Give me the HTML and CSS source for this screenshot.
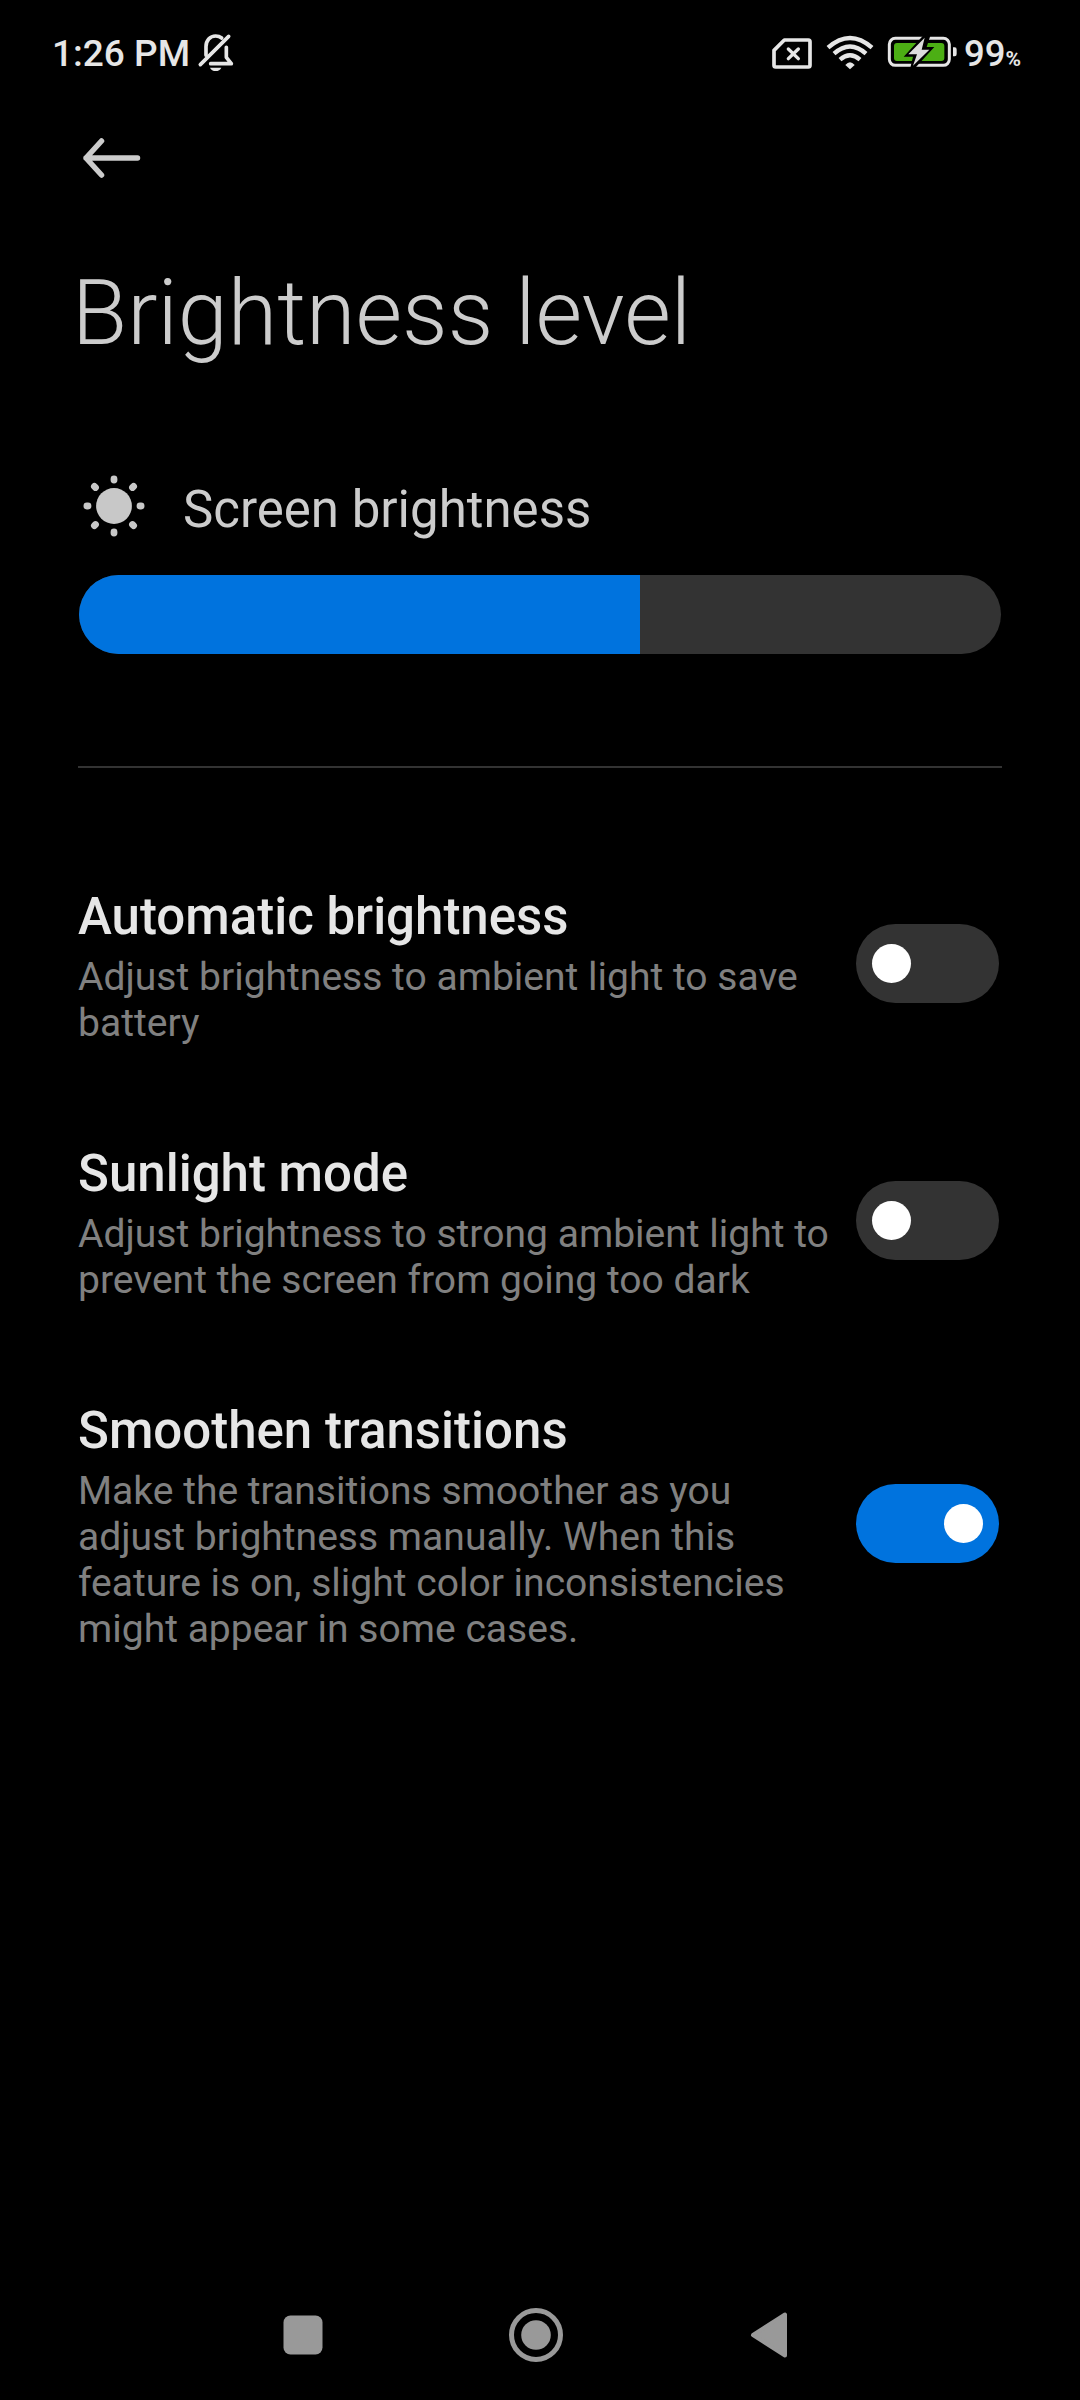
FILE: index.html
```html
<!DOCTYPE html>
<html lang="en">
<head>
<meta charset="utf-8">
<title>Brightness level</title>
<link rel="stylesheet" href="styles.css">
</head>
<body>
<div class="screen">
  <header class="status">
    <span class="clock">1:26 PM</span>
    <svg class="bell" viewBox="470 36 114 120" fill="none" stroke="#e6e6e6" stroke-width="11" stroke-linecap="round" stroke-linejoin="round">
      <path d="M497 106V80C497 62 509 48 526 48C533 48 539 50 544 54"/>
      <path d="M511 131H573L558 112V82"/>
      <path d="M480 134L565 49"/>
      <path d="M509 143H543C540 150 534 153 526 153C518 153 512 150 509 143Z" fill="#e6e6e6" stroke="none"/>
    </svg>
    <div class="indicators">
      <svg class="sim" viewBox="66 54 120 93" fill="none" stroke="#e6e6e6" stroke-linejoin="round">
        <path d="M103 60H175Q180 60 180 65V136Q180 141 175 141H77Q72 141 72 136V91Z" stroke-width="11"/>
        <path d="M115 87L145 116M145 87L115 116" stroke-width="10" stroke-linecap="round"/>
      </svg>
      <svg class="wifi" viewBox="228 44 144 105" fill="none" stroke="#e6e6e6" stroke-width="13">
        <path d="M234 82Q300 24 366 82"/>
        <path d="M252 100Q300 57 348 100"/>
        <path d="M270 118Q300 92 330 118"/>
        <path d="M300 147L286 134Q300 118 314 134Z" fill="#e6e6e6" stroke="none"/>
      </svg>
      <svg class="battery" viewBox="411 45 213 102">
        <rect x="418" y="55" width="180" height="81" rx="18" fill="none" stroke="#e6e6e6" stroke-width="9"/>
        <rect x="432" y="69" width="151" height="54" rx="9" fill="#4caf14"/>
        <path d="M609 82H614Q620 82 620 89V102Q620 109 614 109H609Z" fill="#e6e6e6"/>
        <path d="M519 47L461 110H489L481 143H496L553 81H530L541 47Z" fill="#000"/>
        <path d="M524 53L475 103H501L489 137L538 89H515Z" fill="#dcdcdc"/>
      </svg>
      <span class="charge">99<small>%</small></span>
    </div>
  </header>

  <nav class="toolbar">
    <svg class="back" viewBox="0 0 60 44" fill="none" stroke="#ccc" stroke-width="5.5" stroke-linecap="round" stroke-linejoin="round">
      <path d="M56.500 22H5M20.500 5L5 22L20.500 39"/>
    </svg>
  </nav>

  <h1 class="heading">Brightness level</h1>

  <section class="brightness">
    <div class="label">
      <svg class="sun" viewBox="-31 -31 62 62" fill="#c8c8c8">
        <circle r="17.900"/>
        <g stroke="#c8c8c8" stroke-width="6.800" stroke-linecap="round">
          <path d="M0-27.100V-26M0 27.100V26M-27.100 0H-26M27.100 0H26M-19.600-19.600L-18.500-18.500M19.600-19.600L18.500-18.500M-19.600 19.600L-18.500 18.500M19.600 19.600L18.500 18.500"/>
        </g>
      </svg>
      <span class="label-text">Screen brightness</span>
    </div>
    <div class="slider"><div class="fill"></div></div>
  </section>

  <hr class="divider">

  <main class="settings">
    <section class="row">
      <div class="copy">
        <h2>Automatic brightness</h2>
        <p>Adjust brightness to ambient light to save<br>battery</p>
      </div>
      <div class="toggle"><span class="knob"></span></div>
    </section>
    <section class="row">
      <div class="copy">
        <h2>Sunlight mode</h2>
        <p>Adjust brightness to strong ambient light to<br>prevent the screen from going too dark</p>
      </div>
      <div class="toggle"><span class="knob"></span></div>
    </section>
    <section class="row">
      <div class="copy">
        <h2>Smoothen transitions</h2>
        <p>Make the transitions smoother as you<br>adjust brightness manually. When this<br>feature is on, slight color inconsistencies<br>might appear in some cases.</p>
      </div>
      <div class="toggle on"><span class="knob"></span></div>
    </section>
  </main>

  <footer class="navbar">
    <svg class="recents" viewBox="0 0 40 40"><rect x=".5" y=".5" width="39" height="39" rx="7" fill="#999"/></svg>
    <svg class="home" viewBox="0 0 56 56"><circle cx="28" cy="28" r="24.500" fill="none" stroke="#999" stroke-width="5"/><circle cx="28" cy="28" r="14.800" fill="#999"/></svg>
    <svg class="return" viewBox="0 0 38 48"><path d="M3 24L35 3.500V44.500Z" fill="#999" stroke="#999" stroke-width="4" stroke-linejoin="round"/></svg>
  </footer>
</div>
</body>
</html>
```
FILE: styles.css
```css
* { box-sizing: border-box; }

body {
  margin: 0;
  background: #000;
  font-family: Roboto, "Liberation Sans", sans-serif;
}

.screen {
  display: flex;
  flex-direction: column;
  width: 1080px;
  height: 2400px;
  background: #000;
  overflow: hidden;
}

svg { display: block; flex: none; }

.status {
  display: flex;
  align-items: flex-start;
  height: 106px;
  padding: 32px 58px 0 52px;
  color: #e6e6e6;
  font-weight: 500;
}

.clock {
  width: 145px;
  padding-top: 1px;
  font-size: 37px;
  line-height: 42px;
  white-space: nowrap;
}

.bell { width: 38px; height: 40px; }

.indicators { display: flex; margin-left: auto; }
.sim { width: 40px; height: 31px; margin: 6px 14px 0 0; }
.wifi { width: 48px; height: 35px; margin: 2.700px 13px 0 0; }
.battery { width: 71px; height: 34px; margin: 3px 6px 0 0; }

.charge {
  width: 58px;
  padding-top: 1px;
  font-size: 36.500px;
  line-height: 42px;
  white-space: nowrap;
}
.charge small { font-size: 21px; font-weight: 700; }

.toolbar { height: 104px; padding: 30px 0 0 81px; }
.back { width: 60px; height: 44px; }

.heading {
  height: 265px;
  margin: 0;
  padding: 51px 0 0 72px;
  color: #ccc;
  font-size: 90px;
  font-weight: 300;
  line-height: 106px;
  white-space: nowrap;
}

.brightness { height: 291px; padding: 0 79px; }

.label { display: flex; gap: 38px; height: 100px; padding-left: 4px; }
.sun { width: 62px; height: 62px; }

.label-text {
  padding-top: 5px;
  color: #ccc;
  font-size: 51px;
  line-height: 59px;
  white-space: nowrap;
}

.slider {
  height: 79px;
  border-radius: 40px;
  background: #333;
  overflow: hidden;
}
.fill { width: 561px; height: 100%; background: #0073de; }

.divider {
  width: 924px;
  height: 2px;
  margin: 0 78px 67px;
  border: 0;
  background: #333;
}

.row {
  display: flex;
  align-items: center;
  justify-content: space-between;
  padding: 46px 81px 46px 78px;
}
.copy { width: 770px; padding-top: 6px; white-space: nowrap; }

.row h2 {
  margin: 0 0 7px;
  color: #e6e6e6;
  font-size: 51px;
  font-weight: 500;
  line-height: 60px;
}
.row p {
  margin: 0;
  color: #808080;
  font-size: 39.050px;
  line-height: 46px;
}

.toggle {
  display: flex;
  align-items: center;
  width: 143px;
  height: 79px;
  padding: 0 16px;
  border-radius: 40px;
  background: #333;
}
.toggle.on { justify-content: flex-end; background: #0073de; }
.knob { width: 39px; height: 39px; border-radius: 50%; background: #fff; }

.navbar {
  display: flex;
  align-items: center;
  height: 130px;
  margin-top: auto;
  padding-left: 283px;
}
.recents { width: 40px; height: 40px; margin-right: 185px; }
.home { width: 56px; height: 56px; margin-right: 186px; }
.return { width: 38px; height: 48px; }
```
